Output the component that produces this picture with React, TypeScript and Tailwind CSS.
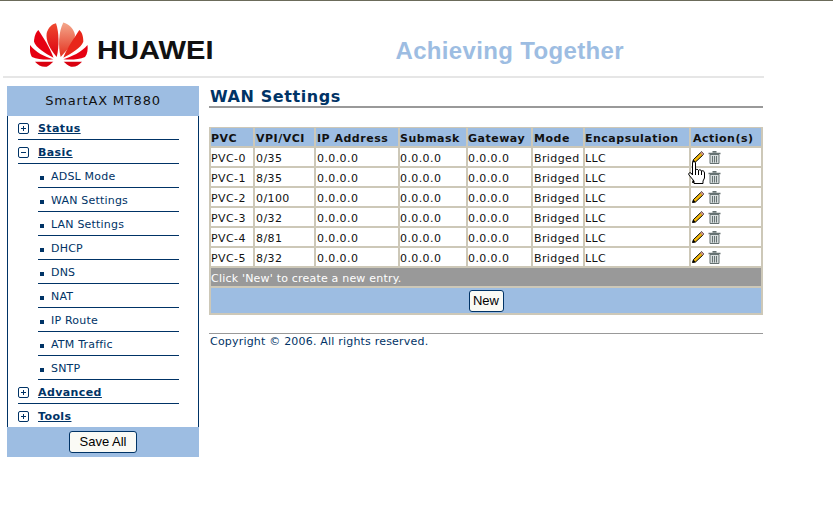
import React from 'react';

const columns = ['PVC', 'VPI/VCI', 'IP Address', 'Submask', 'Gateway', 'Mode', 'Encapsulation', 'Action(s)'];
const rows = [
  ['PVC-0', '0/35'],
  ['PVC-1', '8/35'],
  ['PVC-2', '0/100'],
  ['PVC-3', '0/32'],
  ['PVC-4', '8/81'],
  ['PVC-5', '8/32'],
];
const widths = ['w-[44px]', 'w-[61px]', 'w-[84px]', 'w-[68px]', 'w-[65px]', 'w-[52px]', 'w-[106px]', 'w-[72px]'];
const pads = ['', 'pl-px', 'pl-px', '', '', 'pl-px', '', 'pl-[2px]'];
const subItems = ['ADSL Mode', 'WAN Settings', 'LAN Settings', 'DHCP', 'DNS', 'NAT', 'IP Route', 'ATM Traffic', 'SNTP'];

const HuaweiMark = () => (
  <svg width="58" height="46" viewBox="0 0 58 46">
    <defs>
      <linearGradient id="petal" x1="0" y1="0" x2="0" y2="1">
        <stop offset="0" stopColor="#ee4a30" />
        <stop offset="1" stopColor="#dc0010" />
      </linearGradient>
      <linearGradient id="center" x1="0" y1="0" x2="0" y2="1">
        <stop offset="0" stopColor="#f4a88c" />
        <stop offset="1" stopColor="#e3301e" />
      </linearGradient>
    </defs>
    <path d="M26.700 35 C20 27 15.500 19 16.700 11 C18 6 22 2 26 1.300 C29 10 29.500 24 26.700 35 Z" fill="url(#petal)" />
    <path d="M30.700 35 C28 24 28.500 10 33.300 0.500 C39 2 44 7 45 13 C45 20 37 28 30.700 35 Z" fill="url(#center)" />
    <path d="M23.500 35.700 C15 31 6 26 4 19.700 C4 15 6 10 8.300 8 C13 15 20 26 23.500 35.700 Z" fill="#e60012" />
    <path d="M33.300 35.700 C37 26 45 15 49.300 8 C52 10 53.500 15 53.300 19.700 C51 26 42 31 33.300 35.700 Z" fill="#e8261a" />
    <path d="M23.300 37.300 C15 35 5 30 0 23 C-0.500 27 0 32 2 35 C8 37.500 16 38 23.300 37.300 Z" fill="#e60012" />
    <path d="M33.300 37.300 C41 35 52 30 57.500 23 C58 27 57.500 32 55 35 C49 37.500 41 38 33.300 37.300 Z" fill="#e60012" />
    <path d="M23.300 39.700 L5 39.700 C8 43 12 45.500 16.700 44.700 C19 43.500 21.500 41.500 23.300 39.700 Z" fill="#d9000f" />
    <path d="M33.700 39.700 L52 39.700 C49 43 45 45.500 41 44.700 C38 43.500 35.500 41.500 33.700 39.700 Z" fill="#d9000f" />
  </svg>
);

const PencilIcon = () => (
  <svg width="13" height="12" viewBox="0 0 13 12" className="shrink-0">
    <path d="M0.500 11.500 L1.500 8.500 L9.500 0.800 L12 3 L3.500 11 Z" fill="#f2b90f" stroke="#000" strokeWidth="1" />
    <path d="M9.500 0.800 L12 3 L10.800 4.200 L8.300 2 Z" fill="#ee9c9c" stroke="#777" strokeWidth="0.600" />
    <path d="M0.500 11.500 L1.500 8.500 L3.500 11 Z" fill="#000" />
  </svg>
);

const TrashIcon = () => (
  <svg width="13" height="13" viewBox="0 0 13 13" className="shrink-0">
    <path d="M4.500 0.800 H8.500 M0.500 2.500 H12.500" stroke="#667272" strokeWidth="1.500" fill="none" />
    <path d="M2 3.500 H11 V12.500 H2 Z" fill="#d6dcdc" stroke="#667272" strokeWidth="1" />
    <path d="M4.500 5 V11.500 M6.500 5 V11.500 M8.500 5 V11.500" stroke="#667272" strokeWidth="1" />
  </svg>
);

const HandCursor = () => (
  <svg width="18" height="24" viewBox="0 0 18 24" className="absolute left-[-3px] top-[13px] z-10">
    <path
      d="M4.500 1.500 C5 0.500 7 0.500 7.500 1.500 V9 C8 8 10 8 10.500 9.500 C11 8.500 13 8.500 13.500 10 C14 9.500 16.500 9.500 16.500 12 V17 L15 20 V22.500 H6 V20 L1 14 C0 12.500 1.500 11 3 12 L4.500 14 Z"
      fill="#fff"
      stroke="#000"
      strokeWidth="1"
    />
    <path d="M7.500 9 V14 M10.500 9.500 V14 M13.500 10 V14" stroke="#000" strokeWidth="1" fill="none" />
  </svg>
);

const TreeToggle = ({ open }: { open?: boolean }) => (
  <span className="relative w-[11px] h-[11px] -mt-[2px] border border-[#003366] rounded-[2px] shrink-0">
    <span className="absolute left-[2px] top-[4px] w-[5px] h-px bg-[#003366]" />
    {!open && <span className="absolute left-[4px] top-[2px] w-px h-[5px] bg-[#003366]" />}
  </span>
);

const TopItem = ({ label, open, last }: { label: string; open?: boolean; last?: boolean }) => (
  <div className={`h-6 ml-[10px] mr-[19px] flex items-center border-[#003366] ${last ? 'pt-[3px]' : 'pt-1 border-b'}`}>
    <TreeToggle open={open} />
    <span className="ml-[9px] font-bold underline text-[#003366] text-[11px] tracking-[0.4px]">{label}</span>
  </div>
);

const SubItem = ({ label }: { label: string }) => (
  <div className="h-6 pt-1 ml-[30px] mr-[19px] flex items-center border-b border-[#003366] text-[#003366] text-[11px] tracking-[0.2px]">
    <span className="w-[4px] h-[4px] bg-[#003366] ml-[2px] mr-[7px]" />
    {label}
  </div>
);

const Sidebar = () => (
  <div className="w-[192px] shrink-0">
    <div className="h-[30px] bg-[#9dbde2] flex items-center justify-center text-[13px] tracking-[0.8px] text-[#111]">
      SmartAX MT880
    </div>
    <div className="border-x border-[#003366] h-[311px]">
      <TopItem label="Status" />
      <TopItem label="Basic" open />
      {subItems.map((s) => (
        <SubItem key={s} label={s} />
      ))}
      <TopItem label="Advanced" />
      <TopItem label="Tools" last />
    </div>
    <div className="h-[30px] bg-[#9dbde2] flex items-center justify-center">
      <button className="w-[68px] h-[22px] bg-[#fafaf5] border border-[#003366] rounded-[3px] text-[13px] text-black font-['Liberation_Sans',sans-serif]">
        Save All
      </button>
    </div>
  </div>
);

const cell = 'border border-[#cdc8b8] p-0 h-5 text-[11px] whitespace-nowrap';
const textCell = 'pt-[3px] leading-[15px]';

const WanTable = () => (
  <table className="mt-[19px] table-fixed border-separate border-spacing-0 w-[554px] border-x border-b border-[#cdc8b8]">
    <thead>
      <tr>
        {columns.map((c, i) => (
          <th key={c} className={`${widths[i]} ${cell} ${textCell} ${pads[i]} bg-[#9dbde2] text-left font-bold text-[#111] tracking-[0.5px]`}>
            {c}
          </th>
        ))}
      </tr>
    </thead>
    <tbody>
      {rows.map((r, idx) => (
        <tr key={r[0]}>
          {[r[0], r[1], '0.0.0.0', '0.0.0.0', '0.0.0.0', 'Bridged', 'LLC'].map((v, i) => (
            <td key={i} className={`${cell} ${textCell} ${pads[i]} text-[#111] tracking-[0.4px]`}>
              {v}
            </td>
          ))}
          <td className={`${cell} relative`}>
            <div className="flex items-center gap-[3px] pl-[1px]">
              <PencilIcon />
              <TrashIcon />
            </div>
            {idx === 0 && <HandCursor />}
          </td>
        </tr>
      ))}
      <tr>
        <td colSpan={8} className={`${cell} ${textCell} bg-[#999999] text-white tracking-[0.2px]`}>
          Click 'New' to create a new entry.
        </td>
      </tr>
      <tr>
        <td colSpan={8} className="border border-[#cdc8b8] p-0 h-[27px] bg-[#9dbde2] text-center">
          <button className="w-[35px] h-[22px] bg-[#fafaf5] border border-[#003366] rounded-[3px] text-[13px] text-black font-['Liberation_Sans',sans-serif] align-middle">
            New
          </button>
        </td>
      </tr>
    </tbody>
  </table>
);

export default function App() {
  return (
    <div className="min-h-screen bg-white border-t border-[#6b6b5a] font-['DejaVu_Sans',Verdana,sans-serif]">
      <div className="h-[77px] w-[761px] ml-[3px] border-b-2 border-[#e6e6e6] flex items-start">
        <div className="ml-[27px] mt-[21px]">
          <HuaweiMark />
        </div>
        <span className="ml-[9px] mt-[33px] origin-left scale-x-[1.12] font-['Liberation_Sans',sans-serif] font-bold text-[26px] leading-[32px] text-[#111]">
          HUAWEI
        </span>
        <span className="ml-auto mr-[140px] mt-[36px] font-['Liberation_Sans',sans-serif] font-bold text-[24px] leading-[28px] text-[#9dbde2] tracking-[0.35px]">
          Achieving Together
        </span>
      </div>
      <div className="flex mt-2 ml-[7px]">
        <Sidebar />
        <div className="ml-[10px] w-[554px]">
          <div className="h-[22px] pl-px pt-px border-b-2 border-[#999999] text-[#003366] font-bold text-[16px] leading-[20px] tracking-[0.6px]">
            WAN Settings
          </div>
          <WanTable />
          <div className="mt-[18px] border-t border-[#999999] pl-px text-[#003366] text-[11px] tracking-[0.2px]">
            Copyright © 2006. All rights reserved.
          </div>
        </div>
      </div>
    </div>
  );
}
